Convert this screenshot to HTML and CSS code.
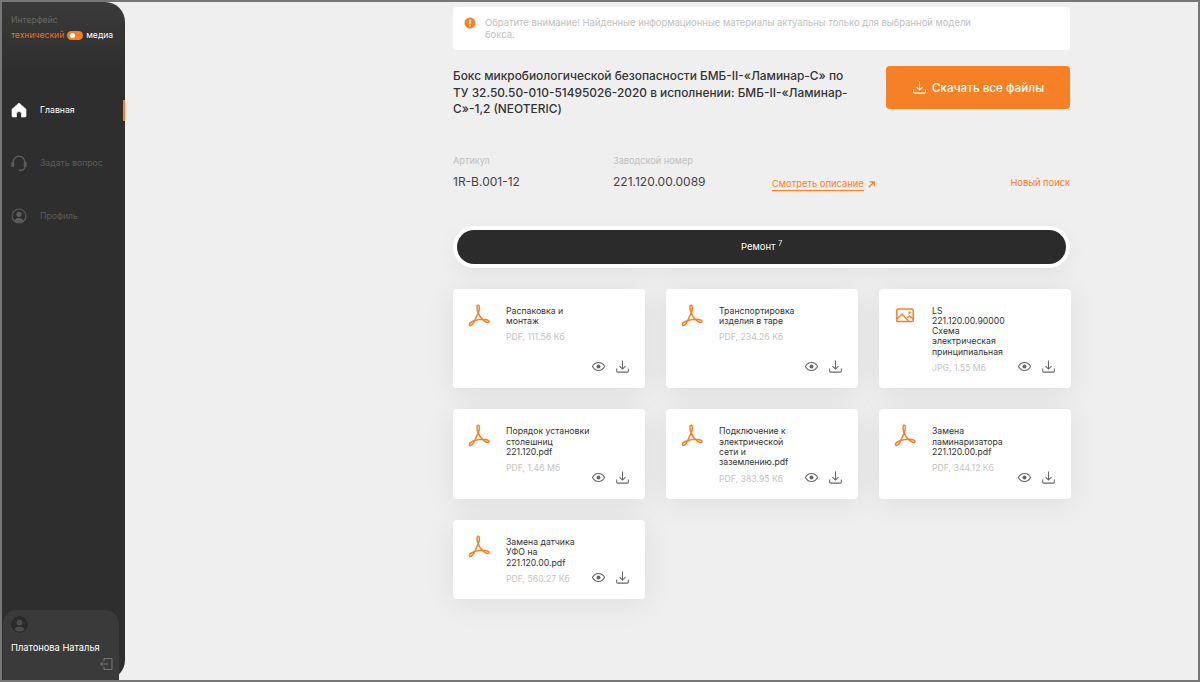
FILE: index.html
```html
<!DOCTYPE html>
<html lang="ru">
<head>
    <meta charset="UTF-8">
    <meta name="viewport" content="width=device-width, initial-scale=1.0">
    <title>Документация</title>
    <link rel="stylesheet" href="styles.css">
</head>
<body>
    <svg class="defs" width="0" height="0">
        <symbol id="pdf" viewBox="0 0 24 24">
            <path d="M11 8.500C9.600 4.800 9.700 1.300 11.200 1.300c1.500 0 1.600 3.400.2 7.200L7 18c-1.400 2.800-3.500 4-4.500 3-.9-1.100 1.200-3.200 4.600-4.300 4-1.300 9-1.700 11.600-1.200 2.700.5 3.900 1.700 3.200 2.600-.7 1-3.200.2-5.400-1.700-2.200-1.900-4.500-4.500-5.500-7.900z" fill="none" stroke="#f58025" stroke-width="1.500" stroke-linejoin="round"/>
        </symbol>
        <symbol id="image" viewBox="0 0 24 24">
            <rect x="3.800" y="5" width="16.400" height="12.600" rx="1.200" fill="none" stroke="#f58025" stroke-width="1.500"/>
            <path d="M4 15l5-5 6.500 7M14 14l2.500-2 4 3.500" fill="none" stroke="#f58025" stroke-width="1.400"/>
            <circle cx="16.500" cy="8.500" r="1.200" fill="#f58025"/>
        </symbol>
        <symbol id="eye" viewBox="0 0 16 16">
            <path d="M1.500 8C3 5.200 5.300 3.800 8 3.800s5 1.400 6.500 4.200C13 10.800 10.700 12.200 8 12.200S3 10.800 1.500 8z" fill="none" stroke="#666" stroke-width="1.100"/>
            <circle cx="8" cy="8" r="2.100" fill="#666"/>
        </symbol>
        <symbol id="download" viewBox="0 0 16 16">
            <path d="M8 1.500v9M4.800 7.500L8 10.700l3.200-3.200M1.800 10v3a1 1 0 0 0 1 1h10.400a1 1 0 0 0 1-1v-3" fill="none" stroke="currentColor" stroke-width="1.100"/>
        </symbol>
    </svg>

    <div class="page">
        <aside class="sidebar">
            <div class="mode">
                <div class="mode-title">Интерфейс</div>
                <div class="mode-row">
                    <span class="mode-on">технический</span>
                    <span class="switch"></span>
                    <span>медиа</span>
                </div>
            </div>

            <nav class="nav">
                <a class="nav-item active">
                    <svg class="nav-icon" viewBox="0 0 16 16"><path d="M8 1L15 7.200V14a1 1 0 0 1-1 1h-3.500v-3a2.500 2.500 0 0 0-5 0v3H2a1 1 0 0 1-1-1V7.200z" fill="#fff" stroke="#fff" stroke-width=".6" stroke-linejoin="round"/></svg>
                    Главная
                </a>
                <a class="nav-item">
                    <svg class="nav-icon" viewBox="0 0 16 16"><path d="M2.300 8V7a5.700 5.700 0 0 1 11.400 0v1" fill="none" stroke="#5c5c5c" stroke-width="1.400"/><rect x=".3" y="6.800" width="3" height="5.400" rx="1.400" fill="#5c5c5c"/><rect x="12.700" y="6.800" width="3" height="5.400" rx="1.400" fill="#5c5c5c"/><path d="M13.800 12c0 2.300-2 3.400-4.800 3.400" fill="none" stroke="#5c5c5c" stroke-width="1.200"/><circle cx="8.600" cy="15.200" r=".9" fill="#5c5c5c"/></svg>
                    Задать вопрос
                </a>
                <a class="nav-item">
                    <svg class="nav-icon" viewBox="0 0 16 16"><circle cx="8" cy="8" r="7" fill="none" stroke="#5c5c5c" stroke-width="1.200"/><circle cx="8" cy="6.300" r="2.600" fill="#5c5c5c"/><path d="M3.300 12.600C4.300 10.700 6 10 8 10s3.700.7 4.700 2.600A6.400 6.400 0 0 1 8 14.600a6.400 6.400 0 0 1-4.700-2z" fill="#5c5c5c"/></svg>
                    Профиль
                </a>
            </nav>

            <div class="user">
                <svg class="user-icon" viewBox="0 0 16 16"><circle cx="8" cy="8" r="7.200" fill="#2b2b2b" stroke="#222" stroke-width=".8"/><circle cx="8" cy="6.200" r="2.700" fill="#4d4d4d"/><path d="M3.200 12.600C4.200 10.700 6 10 8 10s3.800.7 4.800 2.600A6.500 6.500 0 0 1 8 14.700a6.500 6.500 0 0 1-4.800-2.100z" fill="#4d4d4d"/></svg>
                <div class="user-name">Платонова Наталья</div>
                <svg class="user-exit" viewBox="0 0 14 14"><path d="M5 4V1.500h8v11H5V10M9 7H1.500M4 4.500L1.500 7 4 9.500" fill="none" stroke="#777" stroke-width="1"/></svg>
            </div>
            <span class="nav-mark"></span>
        </aside>

        <main class="main">
            <div class="content">
                <div class="notice">
                    <svg class="notice-icon" viewBox="0 0 12 12"><circle cx="6" cy="6" r="5.500" fill="#f58025"/><rect x="5.200" y="2.500" width="1.600" height="4.200" fill="#fff"/><rect x="5.200" y="7.800" width="1.600" height="1.600" fill="#fff"/></svg>
                    <p>Обратите внимание! Найденные информационные материалы актуальны только для выбранной модели бокса.</p>
                </div>

                <div class="head">
                    <h1>Бокс микробиологической безопасности БМБ-II-«Ламинар-С» по ТУ 32.50.50-010-51495026-2020 в исполнении: БМБ-II-«Ламинар-С»-1,2 (NEOTERIC)</h1>
                    <button class="btn">
                        <svg viewBox="0 0 16 16"><use href="#download"/></svg>
                        Скачать все файлы
                    </button>
                </div>

                <div class="info">
                    <div class="info-col first">
                        <div class="info-label">Артикул</div>
                        <div class="info-value">1R-B.001-12</div>
                    </div>
                    <div class="info-col second">
                        <div class="info-label">Заводской номер</div>
                        <div class="info-value">221.120.00.0089</div>
                    </div>
                    <a class="desc-link"><span>Смотреть описание</span>
                        <svg viewBox="0 0 10 10"><path d="M2 8l5.500-5.500M3 2h5v5" fill="none" stroke="#f58025" stroke-width="1.400"/></svg>
                    </a>
                    <a class="new-search">Новый поиск</a>
                </div>

                <div class="tab"><div class="tab-inner">Ремонт <sup>7</sup></div></div>

                <div class="files">
                    <div class="card">
                        <svg class="file-icon"><use href="#pdf"/></svg>
                        <div class="card-body">
                            <div class="card-title">Распаковка и монтаж</div>
                            <div class="card-meta">PDF, 111.56 Кб</div>
                        </div>
                        <div class="actions">
                            <svg class="act"><use href="#eye"/></svg>
                            <svg class="act"><use href="#download"/></svg>
                        </div>
                    </div>
                    <div class="card">
                        <svg class="file-icon"><use href="#pdf"/></svg>
                        <div class="card-body">
                            <div class="card-title">Транспортировка изделия в таре</div>
                            <div class="card-meta">PDF, 234.26 Кб</div>
                        </div>
                        <div class="actions">
                            <svg class="act"><use href="#eye"/></svg>
                            <svg class="act"><use href="#download"/></svg>
                        </div>
                    </div>
                    <div class="card">
                        <svg class="file-icon"><use href="#image"/></svg>
                        <div class="card-body">
                            <div class="card-title">LS 221.120.00.90000 Схема электрическая принципиальная</div>
                            <div class="card-meta">JPG, 1.55 Мб</div>
                        </div>
                        <div class="actions">
                            <svg class="act"><use href="#eye"/></svg>
                            <svg class="act"><use href="#download"/></svg>
                        </div>
                    </div>
                    <div class="card">
                        <svg class="file-icon"><use href="#pdf"/></svg>
                        <div class="card-body">
                            <div class="card-title">Порядок установки столешниц 221.120.pdf</div>
                            <div class="card-meta">PDF, 1.46 Мб</div>
                        </div>
                        <div class="actions">
                            <svg class="act"><use href="#eye"/></svg>
                            <svg class="act"><use href="#download"/></svg>
                        </div>
                    </div>
                    <div class="card">
                        <svg class="file-icon"><use href="#pdf"/></svg>
                        <div class="card-body">
                            <div class="card-title">Подключение к электрической сети и заземлению.pdf</div>
                            <div class="card-meta">PDF, 383.95 Кб</div>
                        </div>
                        <div class="actions">
                            <svg class="act"><use href="#eye"/></svg>
                            <svg class="act"><use href="#download"/></svg>
                        </div>
                    </div>
                    <div class="card">
                        <svg class="file-icon"><use href="#pdf"/></svg>
                        <div class="card-body">
                            <div class="card-title">Замена ламинаризатора 221.120.00.pdf</div>
                            <div class="card-meta">PDF, 344.12 Кб</div>
                        </div>
                        <div class="actions">
                            <svg class="act"><use href="#eye"/></svg>
                            <svg class="act"><use href="#download"/></svg>
                        </div>
                    </div>
                    <div class="card">
                        <svg class="file-icon"><use href="#pdf"/></svg>
                        <div class="card-body">
                            <div class="card-title">Замена датчика УФО на 221.120.00.pdf</div>
                            <div class="card-meta">PDF, 560.27 Кб</div>
                        </div>
                        <div class="actions">
                            <svg class="act"><use href="#eye"/></svg>
                            <svg class="act"><use href="#download"/></svg>
                        </div>
                    </div>
                </div>
            </div>
        </main>
    </div>
</body>
</html>
```

FILE: styles.css
```css
* {
    margin: 0;
    padding: 0;
    box-sizing: border-box;
}

body {
    font-family: Inter, "Liberation Sans", sans-serif;
    color: #333;
    background: #efefef;
}

.defs {
    display: block;
    height: 0;
}

.page {
    display: flex;
    height: 682px;
    border: 2px solid #777;
    overflow: hidden;
    background: #efefef;
}

/* левая панель */
.sidebar {
    position: relative;
    display: flex;
    flex-direction: column;
    width: 123px;
    flex-shrink: 0;
    background: linear-gradient(#3a3a3a, #2e2e2e 70px);
    border-radius: 0 20px 20px 0;
}

.mode {
    padding: 12px 0 0 9px;
    font-size: 8.600px;
    height: 98px;
}

.mode-title {
    color: #666;
    line-height: 12px;
}

.mode-row {
    display: flex;
    align-items: center;
    gap: 3px;
    margin-top: 3px;
    line-height: 12px;
    color: #fff;
}

.mode-on {
    color: #f26b21;
}

.switch {
    position: relative;
    width: 16px;
    height: 9px;
    border-radius: 5px;
    background: #f58025;
}

.switch::after {
    content: "";
    position: absolute;
    left: 2.500px;
    top: 2px;
    width: 5px;
    height: 5px;
    border-radius: 50%;
    background: #fff;
}

.nav-item {
    display: flex;
    align-items: center;
    gap: 13px;
    height: 53px;
    margin-top: -17px;
    margin-bottom: 17px;
    padding-left: 9px;
    font-size: 8.700px;
    color: #5c5c5c;
}

.nav-item.active {
    color: #fff;
}

.nav-icon {
    width: 16px;
    height: 16px;
}

.nav-mark {
    position: absolute;
    right: 0;
    top: 98px;
    width: 2px;
    height: 21px;
    background: #f58025;
}

.user {
    position: relative;
    margin: auto 6px 0 1px;
    height: 70px;
    padding: 6px 0 0 8px;
    background: #3a3a3a;
    border-radius: 14px 14px 0 0;
}

.user-icon {
    display: block;
    width: 17px;
    height: 17px;
}

.user-name {
    margin-top: 8px;
    font-size: 9.300px;
    line-height: 14px;
    color: #fff;
    white-space: nowrap;
}

.user-exit {
    position: absolute;
    right: 6px;
    bottom: 9px;
    width: 14px;
    height: 14px;
}

/* контент */
.main {
    flex: 1;
    padding: 5px 128px 0 328px;
    min-width: 0;
}

.content {
    width: 617px;
}

.notice {
    display: flex;
    gap: 9px;
    height: 43px;
    padding: 10px 90px 0 11px;
    background: #fff;
    border-radius: 4px;
    font-size: 9.450px;
    line-height: 12px;
    color: #c0c0c0;
}

.notice-icon {
    width: 12px;
    height: 12px;
    flex-shrink: 0;
}

.head {
    display: flex;
    justify-content: space-between;
    margin-top: 16px;
}

.head h1 {
    width: 400px;
    margin-top: 2px;
    font-size: 11.900px;
    line-height: 16.500px;
    font-weight: 500;
    color: #333;
}

.btn {
    display: flex;
    align-items: center;
    justify-content: center;
    gap: 5px;
    width: 184px;
    height: 43px;
    border: none;
    border-radius: 4px;
    background: #f58025;
    color: #fff;
    font-family: inherit;
    font-size: 11.700px;
    font-weight: 500;
}

.btn svg {
    width: 15px;
    height: 15px;
}

.info {
    display: flex;
    align-items: flex-end;
    margin-top: 36px;
    height: 36px;
}

.info-col.first {
    width: 160px;
}

.info-col.second {
    width: 159px;
}

.info-label {
    font-size: 9.200px;
    line-height: 12px;
    color: #c0c0c0;
}

.info-value {
    margin-top: 8px;
    font-size: 12px;
    line-height: 14px;
    color: #444;
    padding-bottom: 1px;
}

.desc-link {
    display: flex;
    align-items: center;
    gap: 3px;
    font-size: 9.400px;
    color: #f58025;
    margin-bottom: -1px;
}

.desc-link span {
    border-bottom: 1px solid #f58025;
    line-height: 12px;
}

.desc-link svg {
    width: 9px;
    height: 9px;
}

.new-search {
    margin-left: auto;
    margin-bottom: 1px;
    font-size: 9.300px;
    line-height: 12px;
    color: #f58025;
}

.tab {
    margin-top: 36px;
    height: 42px;
    padding: 4px;
    background: #fff;
    border-radius: 21px;
    box-shadow: 0 6px 20px rgba(0, 0, 0, 0.05);
}

.tab-inner {
    height: 34px;
    line-height: 34px;
    border-radius: 17px;
    background: #2b2b2b;
    color: #fff;
    font-size: 9.500px;
    text-align: center;
}

.tab-inner sup {
    font-size: 7px;
    line-height: 0;
}

.files {
    display: grid;
    grid-template-columns: repeat(3, 1fr);
    gap: 21.500px 21px;
    margin-top: 21px;
}

.card {
    display: flex;
    padding: 17px 15px 14px 14px;
    background: #fff;
    border-radius: 4px;
    box-shadow: 0 4px 30px rgba(0, 0, 0, 0.08);
}

.file-icon {
    width: 24px;
    height: 24px;
    flex-shrink: 0;
    margin: -2px 15px 0 0;
}

.card-body {
    width: 85px;
    flex-shrink: 0;
}

.card-title {
    font-size: 8.700px;
    line-height: 10.300px;
    color: #333;
}

.card-meta {
    margin-top: 5px;
    font-size: 8.700px;
    line-height: 12px;
    color: #c4c4c4;
}

.actions {
    display: flex;
    align-items: center;
    gap: 9px;
    margin-left: auto;
    margin-top: auto;
    color: #666;
}

.act {
    width: 15px;
    height: 15px;
}
```
